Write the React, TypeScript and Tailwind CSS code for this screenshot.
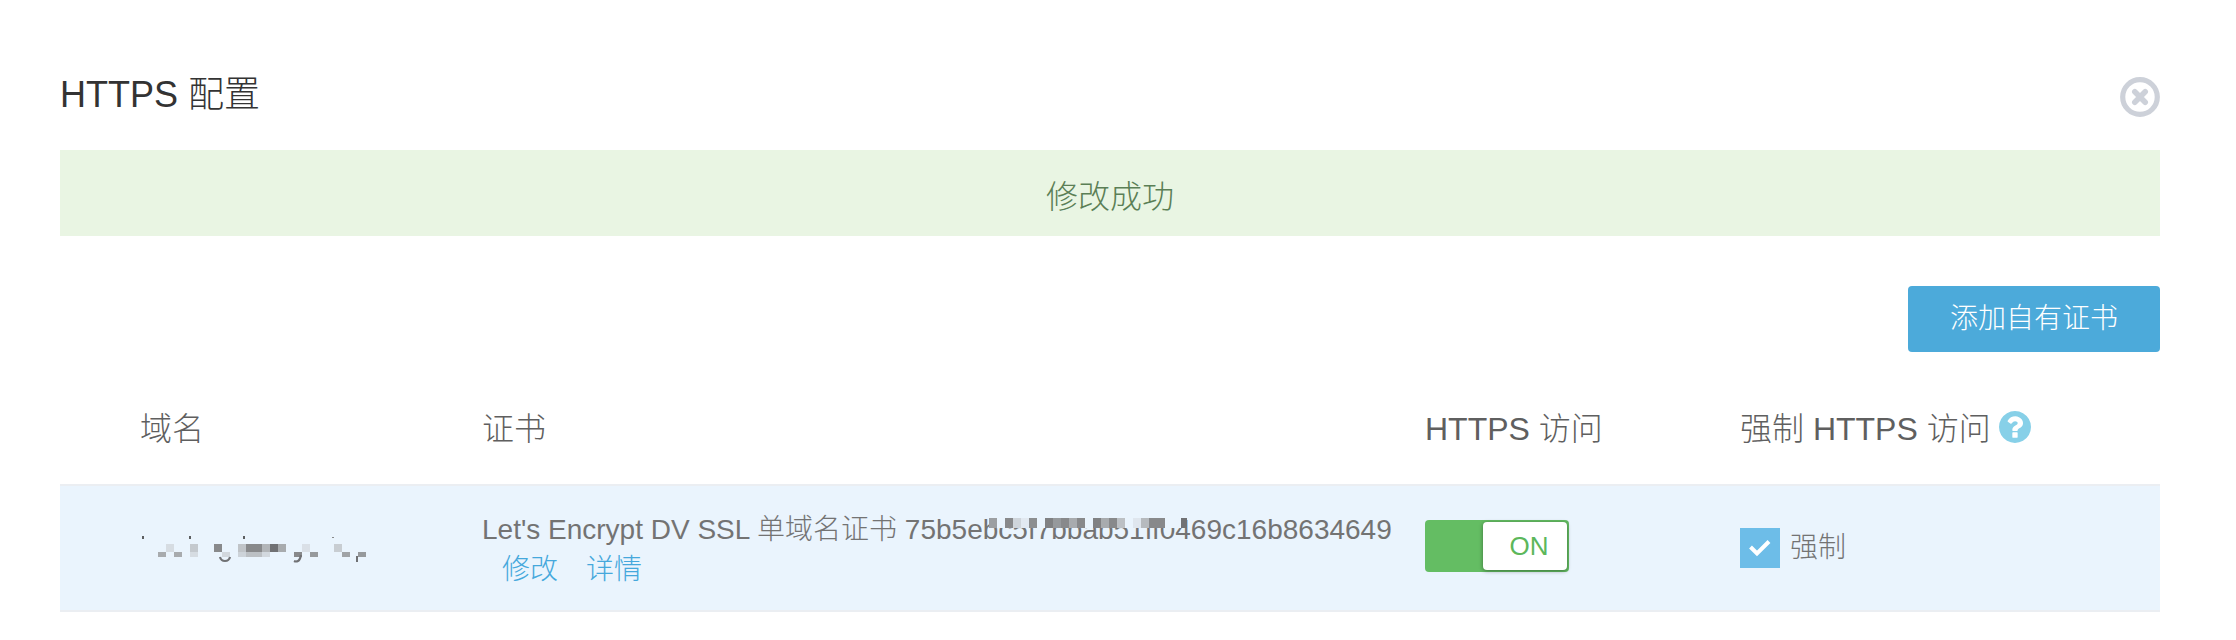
import { useState } from 'react'

type Block = { x: number; y: number; w: number; h: number; fill: string }

const domainBlocks: Block[] = [
  { x: 18, y: 18, w: 8, h: 5, fill: '#a8abae' },
  { x: 26, y: 10, w: 8, h: 8, fill: '#d6dce2' },
  { x: 34, y: 18, w: 8, h: 5, fill: '#a8abae' },
  { x: 50, y: 10, w: 8, h: 8, fill: '#c4c9ce' },
  { x: 50, y: 18, w: 8, h: 5, fill: '#d6dce2' },
  { x: 74, y: 10, w: 8, h: 8, fill: '#88898b' },
  { x: 82, y: 18, w: 8, h: 5, fill: '#d2d8de' },
  { x: 98, y: 10, w: 8, h: 8, fill: '#c0c4c8' },
  { x: 98, y: 18, w: 8, h: 5, fill: '#cdd3d9' },
  { x: 106, y: 10, w: 16, h: 8, fill: '#88898b' },
  { x: 106, y: 18, w: 16, h: 5, fill: '#bcc0c4' },
  { x: 122, y: 10, w: 8, h: 8, fill: '#b2b5b8' },
  { x: 122, y: 18, w: 8, h: 5, fill: '#d2d8de' },
  { x: 130, y: 10, w: 8, h: 8, fill: '#707174' },
  { x: 138, y: 10, w: 8, h: 8, fill: '#a8abae' },
  { x: 154, y: 18, w: 8, h: 5, fill: '#88898b' },
  { x: 162, y: 10, w: 8, h: 8, fill: '#dae0e7' },
  { x: 170, y: 18, w: 8, h: 5, fill: '#96999c' },
  { x: 194, y: 10, w: 8, h: 8, fill: '#c8cdd2' },
  { x: 202, y: 18, w: 8, h: 5, fill: '#a0a3a6' },
  { x: 218, y: 18, w: 8, h: 5, fill: '#96999c' },
]

const hashBlocks = [
  { x: 0, w: 8, fill: '#9c9fa2' },
  { x: 16, w: 8, fill: '#88898b' },
  { x: 24, w: 8, fill: '#cfd5db' },
  { x: 32, w: 8, fill: '#e2e9f1' },
  { x: 40, w: 8, fill: '#8c8e90' },
  { x: 56, w: 8, fill: '#808183' },
  { x: 64, w: 8, fill: '#96999c' },
  { x: 72, w: 8, fill: '#88898b' },
  { x: 80, w: 8, fill: '#a8abae' },
  { x: 88, w: 8, fill: '#88898b' },
  { x: 104, w: 8, fill: '#808183' },
  { x: 112, w: 8, fill: '#a8abae' },
  { x: 120, w: 8, fill: '#88898b' },
  { x: 128, w: 8, fill: '#bcc0c4' },
  { x: 144, w: 8, fill: '#dfe6ee' },
  { x: 152, w: 8, fill: '#b6babe' },
  { x: 160, w: 16, fill: '#88898b' },
  { x: 192, w: 6, fill: '#707174' },
]

function MaskedDomain() {
  return (
    <svg width="230" height="32" viewBox="0 0 230 32" className="block" aria-hidden="true">
      {[2, 49, 103].map((x) => (
        <rect key={x} x={x} y="2" width="2" height="3" fill="#5c5e60" />
      ))}
      <rect x="192" y="3" width="2" height="1" fill="#88898b" />
      {domainBlocks.map((b) => (
        <rect key={`${b.x}-${b.y}`} x={b.x} y={b.y} width={b.w} height={b.h} fill={b.fill} />
      ))}
      <path d="M80 23q1 4 5 4t5-4" fill="none" stroke="#707174" strokeWidth="2.2" />
      <path d="M161 21q-1 5-3 6-2 1-4 0" fill="none" stroke="#707174" strokeWidth="2.2" />
      <path d="M217 22v6" fill="none" stroke="#707174" strokeWidth="2" />
    </svg>
  )
}

function HashMask() {
  return (
    <svg
      width="202"
      height="14"
      viewBox="0 0 202 14"
      className="absolute left-1.5 top-1"
      aria-hidden="true"
    >
      <rect x="6" width="190" height="14" fill="#eaf4fd" />
      {hashBlocks.map((b) => (
        <rect key={b.x} x={b.x} y="4" width={b.w} height="10" fill={b.fill} />
      ))}
    </svg>
  )
}

function CloseIcon() {
  return (
    <svg width="40" height="40" viewBox="0 0 40 40" fill="none" stroke="#cdd1d9" aria-hidden="true">
      <circle cx="20" cy="20" r="17.3" strokeWidth="5.2" />
      <path d="M14.8 14.8l10.4 10.4M25.2 14.8L14.8 25.2" strokeWidth="5.6" strokeLinecap="round" />
    </svg>
  )
}

function HelpIcon() {
  return (
    <svg width="32" height="32" viewBox="128 128 1536 1536" fill="#87d0e8" aria-hidden="true">
      <path d="M1024 1376v-192q0-14-9-23t-23-9h-192q-14 0-23 9t-9 23v192q0 14 9 23t23 9h192q14 0 23-9t9-23zm256-672q0-88-55.5-163t-138.5-116-170-41q-243 0-371 213-15 24 8 42l132 100q7 6 19 6 16 0 25-12 53-68 86-92 34-24 86-24 48 0 85.5 26t37.5 59q0 38-20 61t-68 45q-63 28-115.5 86.5t-52.5 125.5v36q0 14 9 23t23 9h192q14 0 23-9t9-23q0-19 21.5-49.5t54.5-49.5q32-18 49-28.5t46-35 44.5-48 28-60.5 12.5-81zm384 192q0 209-103 385.5t-279.5 279.5-385.5 103-385.5-103-279.5-279.5-103-385.5 103-385.5 279.5-279.5 385.5-103 385.5 103 279.5 279.5 103 385.5z" />
    </svg>
  )
}

export default function App() {
  const [httpsOn, setHttpsOn] = useState(true)
  const [forced, setForced] = useState(true)

  return (
    <main className="bg-white pt-11 pr-[76px] pb-7 pl-[60px] font-light text-[#5f5f5f] [font-family:'Liberation_Sans','Noto_Sans_CJK_SC',sans-serif]">
      <header className="flex h-[106px] items-center justify-between">
        <h1 className="pb-1 text-4xl font-light text-[#333333]">HTTPS 配置</h1>
        <button type="button" aria-label="关闭" className="cursor-pointer">
          <CloseIcon />
        </button>
      </header>

      <div role="status" className="flex h-[86px] items-center justify-center bg-[#e9f5e3] pt-2 text-[32px] text-[#5b7f56]">
        修改成功
      </div>

      <div className="mt-[50px] flex justify-end">
        <button type="button" className="h-[66px] cursor-pointer rounded bg-[#4caada] px-[42px] text-[28px] text-white">
          添加自有证书
        </button>
      </div>

      <table className="mt-[22px] w-full table-fixed border-collapse text-left">
        <thead>
          <tr className="h-[111px] text-[32px]">
            <th scope="col" className="w-[20%] pl-20 font-light">域名</th>
            <th scope="col" className="w-[45%] pl-0.5 font-light">证书</th>
            <th scope="col" className="w-[15%] font-light">HTTPS 访问</th>
            <th scope="col" className="w-[20%] font-light">
              <div className="flex items-center gap-2">
                强制 HTTPS 访问
                <button type="button" aria-label="帮助" className="cursor-pointer pb-1">
                  <HelpIcon />
                </button>
              </div>
            </th>
          </tr>
        </thead>
        <tbody>
          <tr className="h-[126px] border-y-2 border-[#ebeef2] bg-[#eaf4fd] text-[28px] leading-10 text-[#737373]">
            <td className="pt-1 pl-20">
              <MaskedDomain />
            </td>
            <td className="pt-1 pl-0.5">
              <p>
                Let's Encrypt DV SSL 单域名证书 75b5e
                <span className="relative inline-block">
                  bc5f7bbab51ff0
                  <HashMask />
                </span>
                469c16b8634649
              </p>
              <div className="flex gap-7 pl-5 text-[#45a8dc]">
                <a href="#edit">修改</a>
                <a href="#detail">详情</a>
              </div>
            </td>
            <td className="pb-1">
              <button
                type="button"
                role="switch"
                aria-checked={httpsOn}
                aria-label="HTTPS 访问"
                onClick={() => setHttpsOn(!httpsOn)}
                className="flex h-[52px] w-36 cursor-pointer justify-end rounded bg-[#64bd63] p-0.5"
              >
                <span className="flex w-[84px] items-center justify-center rounded-sm bg-white pl-2 text-[26px] text-[#5cb75b] shadow-[0_1px_4px_rgba(0,0,0,0.4)]">
                  {httpsOn ? 'ON' : 'OFF'}
                </span>
              </button>
            </td>
            <td>
              <label className="flex cursor-pointer items-center gap-2.5">
                <span className="relative flex size-10">
                  <input
                    type="checkbox"
                    checked={forced}
                    onChange={() => setForced(!forced)}
                    className="peer size-10 appearance-none bg-white checked:bg-[#6dbde8]"
                  />
                  <svg
                    viewBox="0 0 40 40"
                    className="pointer-events-none absolute inset-0 hidden peer-checked:block"
                    fill="none"
                    stroke="white"
                    strokeWidth="4"
                    aria-hidden="true"
                  >
                    <path d="M10.5 19l6.5 6.5L29 13.5" />
                  </svg>
                </span>
                强制
              </label>
            </td>
          </tr>
        </tbody>
      </table>
    </main>
  )
}
